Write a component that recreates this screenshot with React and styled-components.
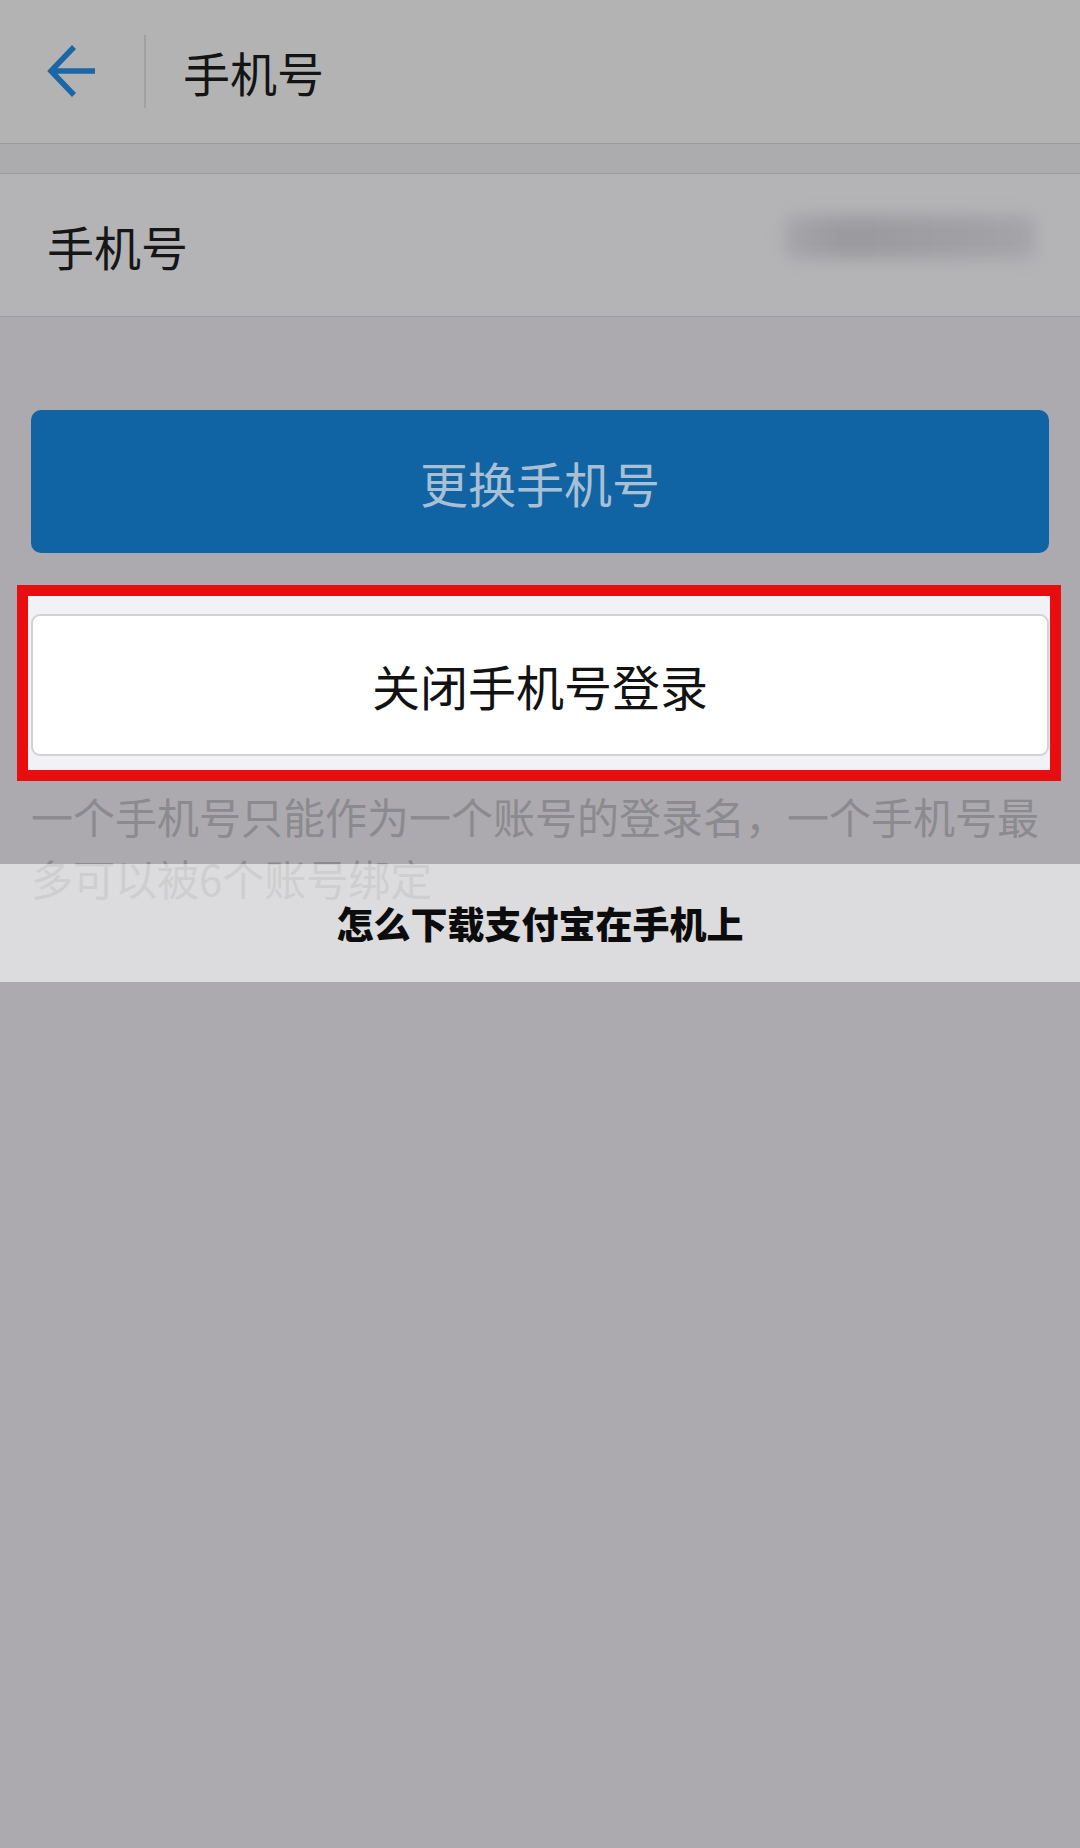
import React from 'react'
import styled, { createGlobalStyle } from 'styled-components'

const GlobalStyle = createGlobalStyle`
    html, body {
        margin: 0;
        padding: 0;
        background-color: #acaaaf;
    }
    body {
        font-family: "Noto Sans CJK SC", "Noto Sans", sans-serif;
    }
`

const App = () => {
    return (
        <Page>
            <GlobalStyle />
            <Header>
                <BackButton>
                    <svg width="52" height="54" viewBox="0 0 52 54" fill="none">
                        <path d="M49 27 H6" stroke="#1a66a6" strokeWidth="5.5" />
                        <path d="M28 3 L5 27 L28 51" stroke="#1a66a6" strokeWidth="5.5" strokeLinejoin="miter" />
                    </svg>
                </BackButton>
                <Divider />
                <Title>手机号</Title>
            </Header>
            <Gap />
            <Row>
                <RowLabel>手机号</RowLabel>
                <BlurredValue />
            </Row>
            <Content>
                <PrimaryButton>更换手机号</PrimaryButton>
                <Highlight>
                    <SecondaryButton>关闭手机号登录</SecondaryButton>
                </Highlight>
                <Note>一个手机号只能作为一个账号的登录名，一个手机号最多可以被6个账号绑定</Note>
            </Content>
            {/* caption bar laid over the screenshot */}
            <Caption>怎么下载支付宝在手机上</Caption>
        </Page>
    )
}

export default App

const Page = styled.div`
    position: relative;
    width: 1080px;
    min-height: 1848px;
    background-color: #acaaaf;
`

const Header = styled.header`
    height: 143px;
    background-color: #b3b3b3;
    border-bottom: 1px solid #9a9a9c;
    display: flex;
    align-items: center;
`

const BackButton = styled.div`
    width: 52px;
    height: 54px;
    margin-left: 46px;
    margin-top: -2px;
    display: flex;
    align-items: center;
`

const Divider = styled.div`
    width: 2px;
    height: 73px;
    background-color: #a0a0a2;
    margin-left: 46px;
`

const Title = styled.h1`
    margin: 0 0 0 37px;
    font-size: 47px;
    font-weight: 400;
    color: #141414;
    line-height: 1;
`

const Gap = styled.div`
    height: 29px;
    background-color: #acabae;
    border-bottom: 1px solid #9a9a9c;
`

const Row = styled.div`
    height: 142px;
    background-color: #b4b3b6;
    border-bottom: 1px solid #9c9b9e;
    display: flex;
    align-items: center;
    justify-content: space-between;
    padding: 0 45px 0 47px;
`

const RowLabel = styled.span`
    font-size: 47px;
    color: #161616;
    line-height: 1;
`

const BlurredValue = styled.div`
    width: 250px;
    height: 42px;
    margin-top: -16px;
    background: linear-gradient(90deg, #a6a5a9 0%, #9a999d 25%, #a09fa3 70%, #a5a4a8 100%);
    border-radius: 10px;
    filter: blur(8px);
`

const Content = styled.div`
    padding: 93px 31px 0;
`

const PrimaryButton = styled.div`
    height: 143px;
    border-radius: 10px;
    background-color: #1164a3;
    color: #a9bfd4;
    font-size: 48px;
    display: flex;
    align-items: center;
    justify-content: center;
`

const Highlight = styled.div`
    margin: 32px -12px 0 -14px;
    border: 11px solid #e80d0f;
    background-color: #f2f2f6;
    padding: 18px 1px 14px 3px;
`

const SecondaryButton = styled.div`
    height: 138px;
    border: 2px solid #d2d2d5;
    border-radius: 9px;
    background-color: #ffffff;
    color: #121212;
    font-size: 48px;
    display: flex;
    align-items: center;
    justify-content: center;
`

const Note = styled.p`
    margin: 4px 0 0;
    font-size: 42px;
    line-height: 62px;
    color: #8b8a8e;
`

const Caption = styled.div`
    position: absolute;
    left: 0;
    right: 0;
    top: 864px;
    height: 118px;
    background-color: rgba(255, 255, 255, 0.58);
    display: flex;
    align-items: center;
    justify-content: center;
    font-size: 37px;
    font-weight: 900;
    color: #0c0c0c;
`
